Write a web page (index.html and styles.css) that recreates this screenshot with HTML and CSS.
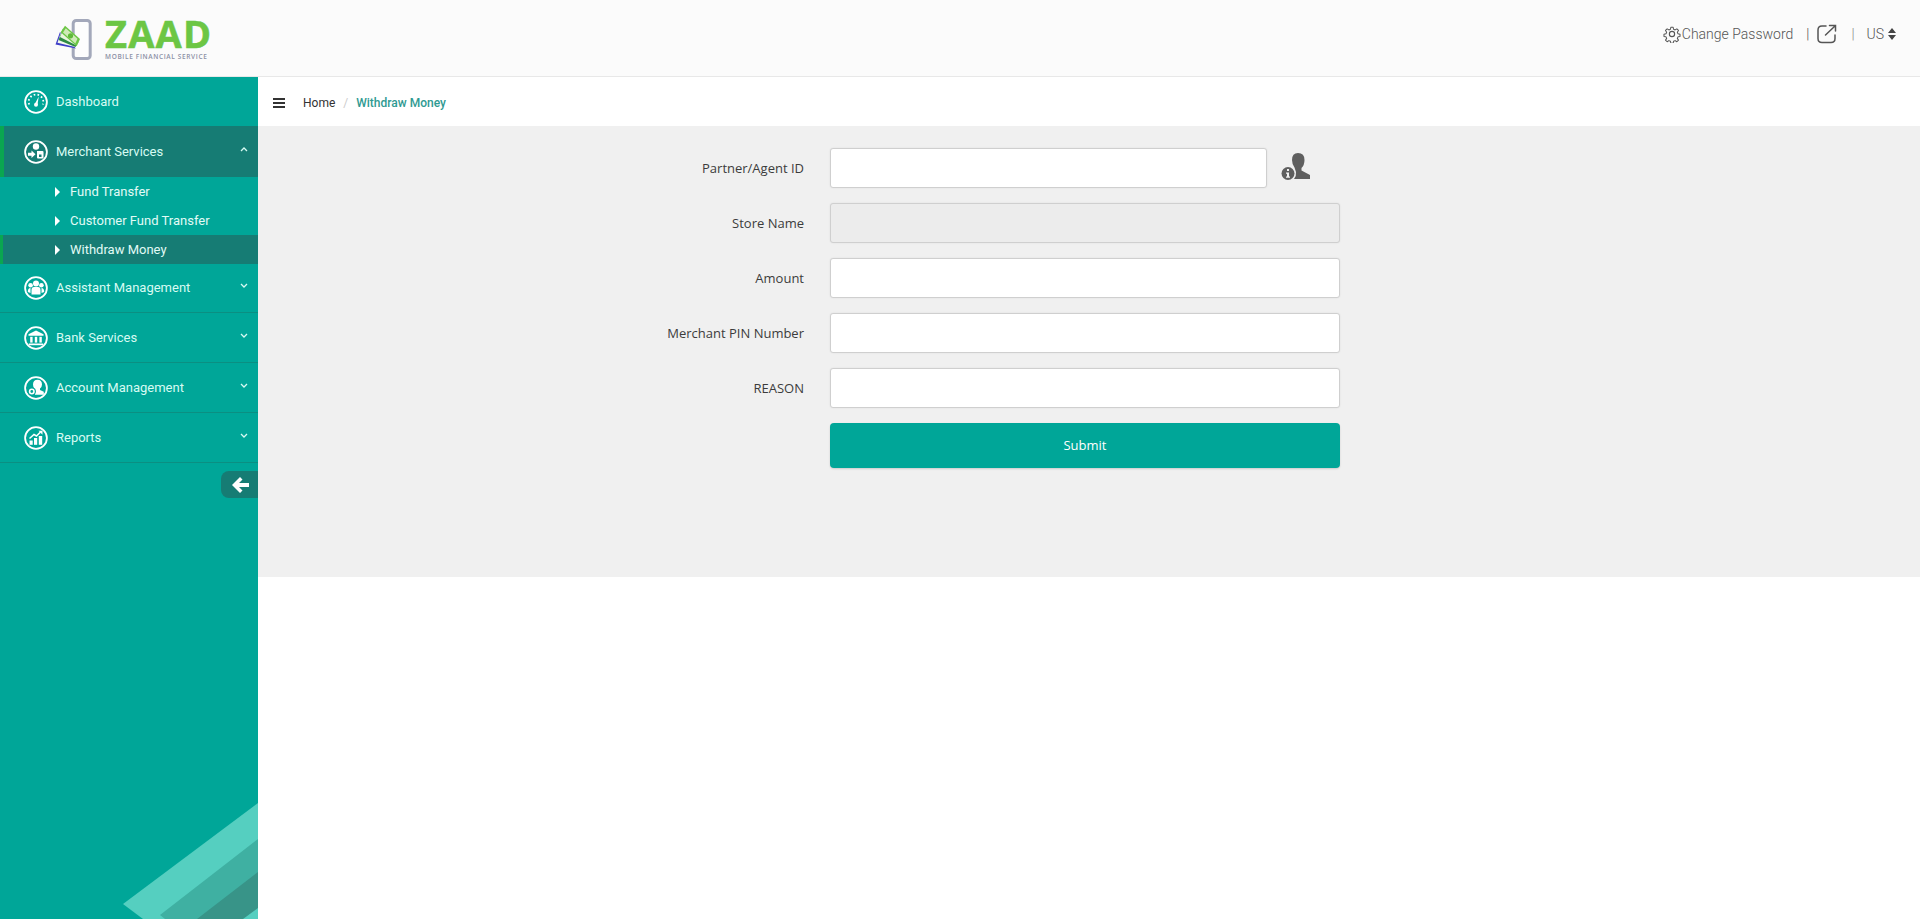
FILE: index.html
```html
<!DOCTYPE html>
<html lang="en">
<head>
    <meta charset="UTF-8">
    <meta name="viewport" content="width=device-width, initial-scale=1.0">
    <title>ZAAD - Withdraw Money</title>
    <link rel="stylesheet" href="styles.css">
</head>
<body>
    <header class="topbar">
        <div class="logo">
            <svg class="logo-mark" width="40" height="44" viewBox="0 0 40 44">
                <rect x="18.200" y="1.500" width="17" height="38" rx="3" fill="#fdfdfd" stroke="#a3a8ba" stroke-width="3"/>
                <rect x="24" y="36.700" width="6" height="1.300" fill="#fff"/>
                <polygon points="0.500,25.500 5,13 21,29.500" fill="#3f3fc8"/>
                <polygon points="2.500,23.800 6,13 21,28.300" fill="#f4f8f0"/>
                <polygon points="3.500,21 8,9.500 23.500,23 20.500,28" fill="#2f8a44"/>
                <polygon points="5,18 9,8.500 24,21.500 21.500,26.500" fill="#e8f5dd"/>
                <polygon points="5.700,13.300 10,6.700 25,20 21.700,27.300" fill="#6cc644"/>
                <polygon points="8,13.500 10.800,9.300 22.500,19.800 20.300,24.500" fill="#cfeab8"/>
                <circle cx="15.500" cy="16.800" r="2.600" fill="#5fb83a"/>
            </svg>
            <div class="logo-text">
                <div class="logo-name">ZAAD</div>
                <div class="logo-tag">MOBILE FINANCIAL SERVICE</div>
            </div>
        </div>
        <div class="top-links">
            <svg class="gear" width="18" height="18" viewBox="0 0 24 24" fill="none" stroke="#555" stroke-width="1.500" stroke-linejoin="round">
                <circle cx="12" cy="12" r="3.500"/>
                <path d="M10.300 2h3.400l.6 3 2.300 1 2.600-1.700 2.400 2.400-1.700 2.600 1 2.300 3 .6v3.400l-3 .6-1 2.300 1.700 2.600-2.400 2.400-2.600-1.700-2.300 1-.6 3h-3.400l-.6-3-2.300-1-2.600 1.700-2.400-2.400 1.700-2.600-1-2.300-3-.6v-3.400l3-.6 1-2.300-1.700-2.600 2.400-2.400 2.600 1.700 2.300-1z" transform="translate(1.200 1.200) scale(.9)"/>
            </svg>
            <span class="change-pass">Change Password</span>
            <span class="sep">|</span>
            <svg class="share" width="20" height="20" viewBox="0 0 20 20" fill="none" stroke="#555" stroke-width="1.500" stroke-linecap="round">
                <path d="M9 2 H5 Q1 2 1 6 V14.500 Q1 18.500 5 18.500 H14 Q18 18.500 18 14.500 V11"/>
                <path d="M8.500 11 L18 2 M12.500 1.500 H18.500 V7"/>
            </svg>
            <span class="sep sep-light">|</span>
            <span class="lang">US</span>
            <svg class="lang-caret" width="8" height="12" viewBox="0 0 8 12" fill="#444">
                <path d="M4 0 L8 5 H0 Z M4 12 L0 7 H8 Z"/>
            </svg>
        </div>
    </header>

    <div class="layout">
        <aside class="sidebar">
            <svg class="corner" width="258" height="116" viewBox="0 0 258 116">
                <polygon points="123,101 258,0 258,116 143,116" fill="#55cfc0"/>
                <polygon points="160,112 258,36 258,116 165,116" fill="#3fb0a2"/>
                <polygon points="197,116 258,69 258,116" fill="#389488"/>
                <polygon points="243,116 258,105 258,116" fill="#55cfc0"/>
            </svg>
            <nav class="menu">
                <a class="menu-item no-line">
                    <svg class="menu-icon" viewBox="0 0 24 24"><circle class="ring" cx="12" cy="12" r="10.900"/><path class="glyph-dots" d="M5.200 14.500 A7.300 7.300 0 1 1 18.800 14.500"/><path class="glyph" d="M10.800 14 L14.800 6.500 L13.400 15 Z"/><circle class="glyph" cx="12" cy="14.800" r="2"/></svg>
                    <span class="menu-label">Dashboard</span>
                </a>
                <a class="menu-item open">
                    <svg class="menu-icon" viewBox="0 0 24 24"><circle class="ring" cx="12" cy="12" r="10.900"/><circle class="glyph" cx="12" cy="6.500" r="3.200"/><path class="glyph" d="M4 12.800 H7.500 V10.500 L11.500 14.300 L7.500 18 V15.800 H4 Z"/><path class="glyph" d="M13 11 H18.500 Q19.500 11 19.500 12 V17.500 Q19.500 18.500 18.500 18.500 H14 Q13 18.500 13 17.500 Z"/><rect class="ring-cut" x="15" y="14.500" width="2.500" height="2.500"/></svg>
                    <span class="menu-label">Merchant Services</span>
                    <svg class="chev" width="8" height="5" viewBox="0 0 8 5"><path d="M1 4 L4 1 L7 4"/></svg>
                </a>
                <div class="submenu">
                    <a class="sub-item"><span class="tri"></span>Fund Transfer</a>
                    <a class="sub-item"><span class="tri"></span>Customer Fund Transfer</a>
                    <a class="sub-item current"><span class="tri"></span>Withdraw Money</a>
                </div>
                <a class="menu-item">
                    <svg class="menu-icon" viewBox="0 0 24 24"><circle class="ring" cx="12" cy="12" r="10.900"/><circle class="glyph" cx="12" cy="7.500" r="3"/><circle class="glyph" cx="6.600" cy="9.300" r="2.300"/><circle class="glyph" cx="17.400" cy="9.300" r="2.300"/><path class="glyph" d="M7.500 18.500 V14 Q7.500 11 10 11 H14 Q16.500 11 16.500 14 V18.500 Z"/><path class="glyph" d="M3.800 16 Q3.800 12 6.500 12 V17 Z M20.200 16 Q20.200 12 17.500 12 V17 Z"/></svg>
                    <span class="menu-label">Assistant Management</span>
                    <svg class="chev" width="8" height="5" viewBox="0 0 8 5"><path d="M1 1 L4 4 L7 1"/></svg>
                </a>
                <a class="menu-item">
                    <svg class="menu-icon" viewBox="0 0 24 24"><circle class="ring" cx="12" cy="12" r="10.900"/><path class="glyph" d="M12 4.500 L19.500 8.300 V9.800 H4.500 V8.300 Z"/><rect class="glyph" x="6.200" y="10.800" width="2.400" height="5.800"/><rect class="glyph" x="10.800" y="10.800" width="2.400" height="5.800"/><rect class="glyph" x="15.400" y="10.800" width="2.400" height="5.800"/><rect class="glyph" x="4.800" y="17.500" width="14.400" height="1.700"/></svg>
                    <span class="menu-label">Bank Services</span>
                    <svg class="chev" width="8" height="5" viewBox="0 0 8 5"><path d="M1 1 L4 4 L7 1"/></svg>
                </a>
                <a class="menu-item">
                    <svg class="menu-icon" viewBox="0 0 24 24"><circle class="ring" cx="12" cy="12" r="10.900"/><path class="glyph" d="M13.500 3.800 Q18 3.800 18 8.500 Q18 11 16 12.500 V14 L19.800 15.800 V18.800 H11 L10.500 13 Q9 11 9 8.500 Q9 3.800 13.500 3.800 Z"/><circle class="ring-cut" cx="7.800" cy="15.500" r="4.200"/><circle class="gear-ring" cx="7.800" cy="15.500" r="2.200"/></svg>
                    <span class="menu-label">Account Management</span>
                    <svg class="chev" width="8" height="5" viewBox="0 0 8 5"><path d="M1 1 L4 4 L7 1"/></svg>
                </a>
                <a class="menu-item">
                    <svg class="menu-icon" viewBox="0 0 24 24"><circle class="ring" cx="12" cy="12" r="10.900"/><rect class="glyph" x="5.500" y="14.500" width="3.200" height="4.300"/><rect class="glyph" x="10" y="12" width="3.200" height="6.800"/><rect class="glyph" x="14.800" y="10" width="3.400" height="8.800"/><path class="glyph-line" d="M5.500 12.500 L10 8.500 L12.500 10 L16.500 6"/><path class="glyph" d="M14.500 4.800 H18.500 V8.800 Z"/></svg>
                    <span class="menu-label">Reports</span>
                    <svg class="chev" width="8" height="5" viewBox="0 0 8 5"><path d="M1 1 L4 4 L7 1"/></svg>
                </a>
            </nav>
            <div class="collapse-row">
                <button class="collapse-btn">
                    <svg width="17" height="16" viewBox="0 0 17 16" fill="#fff"><path d="M8 0 L10.500 2.500 L7 6 H17 V10 H7 L10.500 13.500 L8 16 L0 8 Z"/></svg>
                </button>
            </div>
        </aside>

        <main class="content">
            <div class="crumbs">
                <span class="burger"></span>
                <span class="crumb-home">Home</span>
                <span class="crumb-sep">/</span>
                <span class="crumb-now">Withdraw Money</span>
            </div>
            <form class="panel">
                <div class="row">
                    <label class="row-label">Partner/Agent ID</label>
                    <div class="row-field with-icon">
                        <input class="input" type="text">
                        <svg class="agent-icon" width="30" height="30" viewBox="0 0 30 30" fill="#5f5f5f">
                            <path d="M17 1 Q23.500 1 23.500 8 Q23.500 13 20.500 16 V18.500 L29 23 V27 H13 Q15.500 24 15 20 L13.500 15.500 Q11 12 11 8 Q11 1 17 1 Z"/>
                            <circle cx="7" cy="21.500" r="6.500"/>
                            <path d="M6 17 H8 V19 H6 Z M5 20.500 H8 V24.500 H9 V25.800 H5 V24.500 H6 V21.800 H5 Z" fill="#f0f0f0"/>
                        </svg>
                    </div>
                </div>
                <div class="row">
                    <label class="row-label">Store Name</label>
                    <div class="row-field"><input class="input" type="text" disabled></div>
                </div>
                <div class="row">
                    <label class="row-label">Amount</label>
                    <div class="row-field"><input class="input" type="text"></div>
                </div>
                <div class="row">
                    <label class="row-label">Merchant PIN Number</label>
                    <div class="row-field"><input class="input" type="password"></div>
                </div>
                <div class="row">
                    <label class="row-label">REASON</label>
                    <div class="row-field"><input class="input" type="text"></div>
                </div>
                <div class="row">
                    <span class="row-label"></span>
                    <div class="row-field"><button class="submit-btn" type="button">Submit</button></div>
                </div>
            </form>
        </main>
    </div>
</body>
</html>
```
FILE: styles.css
```css
:root {
    --teal: #00a698;
    --teal-dark: #167c74;
    --green-edge: #0aa650;
    --panel: #f0f0f0;
    --line: #cfcfcf;
}

html, body {
    height: 100%;
}

body {
    margin: 0;
    background: #fff;
    font-family: 'Roboto', 'Liberation Sans', sans-serif;
    font-size: 13px;
    color: #333;
    overflow: hidden;
}

a {
    color: inherit;
    text-decoration: none;
}

.topbar {
    height: 77px;
    box-sizing: border-box;
    background: #fbfbfb;
    border-bottom: 1px solid #e8e8e8;
    display: flex;
    justify-content: space-between;
    align-items: flex-start;
}

.logo {
    display: flex;
    align-items: flex-start;
    margin: 19px 0 0 55px;
}

.logo-mark {
    display: block;
}

.logo-text {
    margin-left: 10px;
}

.logo-name {
    font-family: 'Open Sans', sans-serif;
    font-weight: 700;
    font-size: 38px;
    line-height: 28px;
    letter-spacing: 1.200px;
    color: #6cc644;
    -webkit-text-stroke: .5px #6cc644;
}

.logo-tag {
    margin-top: 5px;
    font-family: 'Open Sans', sans-serif;
    font-size: 6.500px;
    line-height: 9px;
    letter-spacing: .65px;
    font-weight: 600;
    color: #8b90a5;
    white-space: nowrap;
}

.top-links {
    display: flex;
    align-items: center;
    height: 20px;
    margin: 24px 24px 0 0;
    font-weight: 300;
    font-size: 14px;
    color: #555;
}

.change-pass {
    margin-left: 1px;
}

.top-links .sep {
    margin: 0 8px 0 13px;
    font-size: 14px;
    color: #555;
}

.top-links .sep-light {
    margin: 0 12px 0 14px;
    color: #888;
}

.share {
    display: block;
}

.lang-caret {
    margin-left: 4px;
}

.layout {
    display: flex;
    height: 842px;
}

.sidebar {
    position: relative;
    flex: 0 0 258px;
    background: var(--teal);
    overflow: hidden;
}

.corner {
    position: absolute;
    left: 0;
    bottom: 0;
}

.menu {
    position: relative;
}

.menu-item {
    height: 50px;
    box-sizing: border-box;
    display: flex;
    align-items: center;
    padding-left: 24px;
    border-bottom: 1px solid #0b8f82;
    color: #d7fbf3;
    font-size: 13px;
}

.menu-item.no-line {
    height: 49px;
    border-bottom: 0;
}

.menu-item.open {
    height: 51px;
    background: var(--teal-dark);
    border-left: 4px solid var(--green-edge);
    border-bottom: 0;
    padding-left: 20px;
}

.submenu + .menu-item {
    height: 49px;
}

.menu-icon {
    width: 24px;
    height: 24px;
    flex: none;
    margin-right: 8px;
}

.menu-icon .ring {
    fill: none;
    stroke: #fff;
    stroke-width: 1.800;
}

.menu-icon .glyph {
    fill: #fff;
}

.menu-icon .ring-cut {
    fill: var(--teal);
}

.open .menu-icon .ring-cut {
    fill: var(--teal-dark);
}

.menu-icon .gear-ring {
    fill: none;
    stroke: #fff;
    stroke-width: 1.600;
}

.menu-icon .glyph-line {
    fill: none;
    stroke: #fff;
    stroke-width: 1.500;
}

.menu-icon .glyph-dots {
    fill: none;
    stroke: #fff;
    stroke-width: 1.800;
    stroke-dasharray: 1.600 2.300;
}

.menu-label {
    flex: 1;
    margin-bottom: 1px;
}

.chev {
    margin: 0 10px 5px 0;
    fill: none;
    stroke: #d7fbf3;
    stroke-width: 1.300;
}

.sub-item {
    height: 29px;
    box-sizing: border-box;
    display: flex;
    align-items: center;
    padding: 0 0 1px 55px;
    color: #e2fbf6;
    font-size: 13px;
}

.sub-item.current {
    background: var(--teal-dark);
    border-left: 3px solid var(--green-edge);
    padding-left: 52px;
}

.tri {
    width: 0;
    height: 0;
    margin: 1px 10px 0 0;
    border-left: 5px solid #fff;
    border-top: 5px solid transparent;
    border-bottom: 5px solid transparent;
}

.collapse-row {
    position: relative;
    display: flex;
    justify-content: flex-end;
    margin-top: 8px;
}

.collapse-btn {
    width: 37px;
    height: 27px;
    padding: 0 0 0 1px;
    display: flex;
    align-items: center;
    justify-content: center;
    background: var(--teal-dark);
    border: 0;
    border-radius: 8px 0 0 8px;
}

.content {
    flex: 1;
    min-width: 0;
}

.crumbs {
    height: 49px;
    box-sizing: border-box;
    display: flex;
    align-items: center;
    padding: 2px 0 0 15px;
    background: #fff;
    font-size: 12px;
}

.burger {
    width: 12px;
    height: 2px;
    margin-right: 18px;
    background: #333;
    box-shadow: 0 -4px 0 #333, 0 4px 0 #333;
}

.crumb-home {
    color: #333;
}

.crumb-sep {
    margin: 0 8px;
    color: #ccc;
}

.crumb-now {
    color: #2f9a92;
    font-weight: 500;
}

.panel {
    height: 451px;
    box-sizing: border-box;
    padding-top: 22px;
    background-color: var(--panel);
    display: flex;
    flex-direction: column;
    gap: 15px;
}

.row {
    display: flex;
    align-items: center;
    min-height: 40px;
}

.row-label {
    flex: 0 0 546px;
    box-sizing: border-box;
    text-align: right;
    font-family: 'Open Sans', sans-serif;
    font-size: 13px;
    color: #3c3c3c;
}

.row-field {
    margin-left: 26px;
    width: 510px;
    flex: none;
}

.row-field.with-icon {
    display: flex;
    align-items: center;
    gap: 14px;
    width: 470px;
}

.input {
    width: 100%;
    height: 40px;
    box-sizing: border-box;
    padding: 0 12px;
    background: #fff;
    border: 1px solid var(--line);
    border-radius: 3px;
    box-shadow: 0 0 2px rgba(0, 0, 0, 0.08);
    outline: none;
}

.input:disabled {
    background: #ececec;
}

.with-icon .input {
    width: 437px;
    flex: none;
}

.agent-icon {
    flex: none;
    margin-top: -2px;
}

.submit-btn {
    width: 100%;
    height: 45px;
    padding-bottom: 2px;
    display: block;
    background: var(--teal);
    border: 0;
    border-radius: 4px;
    color: #fff;
    font-family: 'Open Sans', sans-serif;
    font-size: 13px;
    box-shadow: 0 1px 2px rgba(0, 0, 0, 0.15);
}
```
